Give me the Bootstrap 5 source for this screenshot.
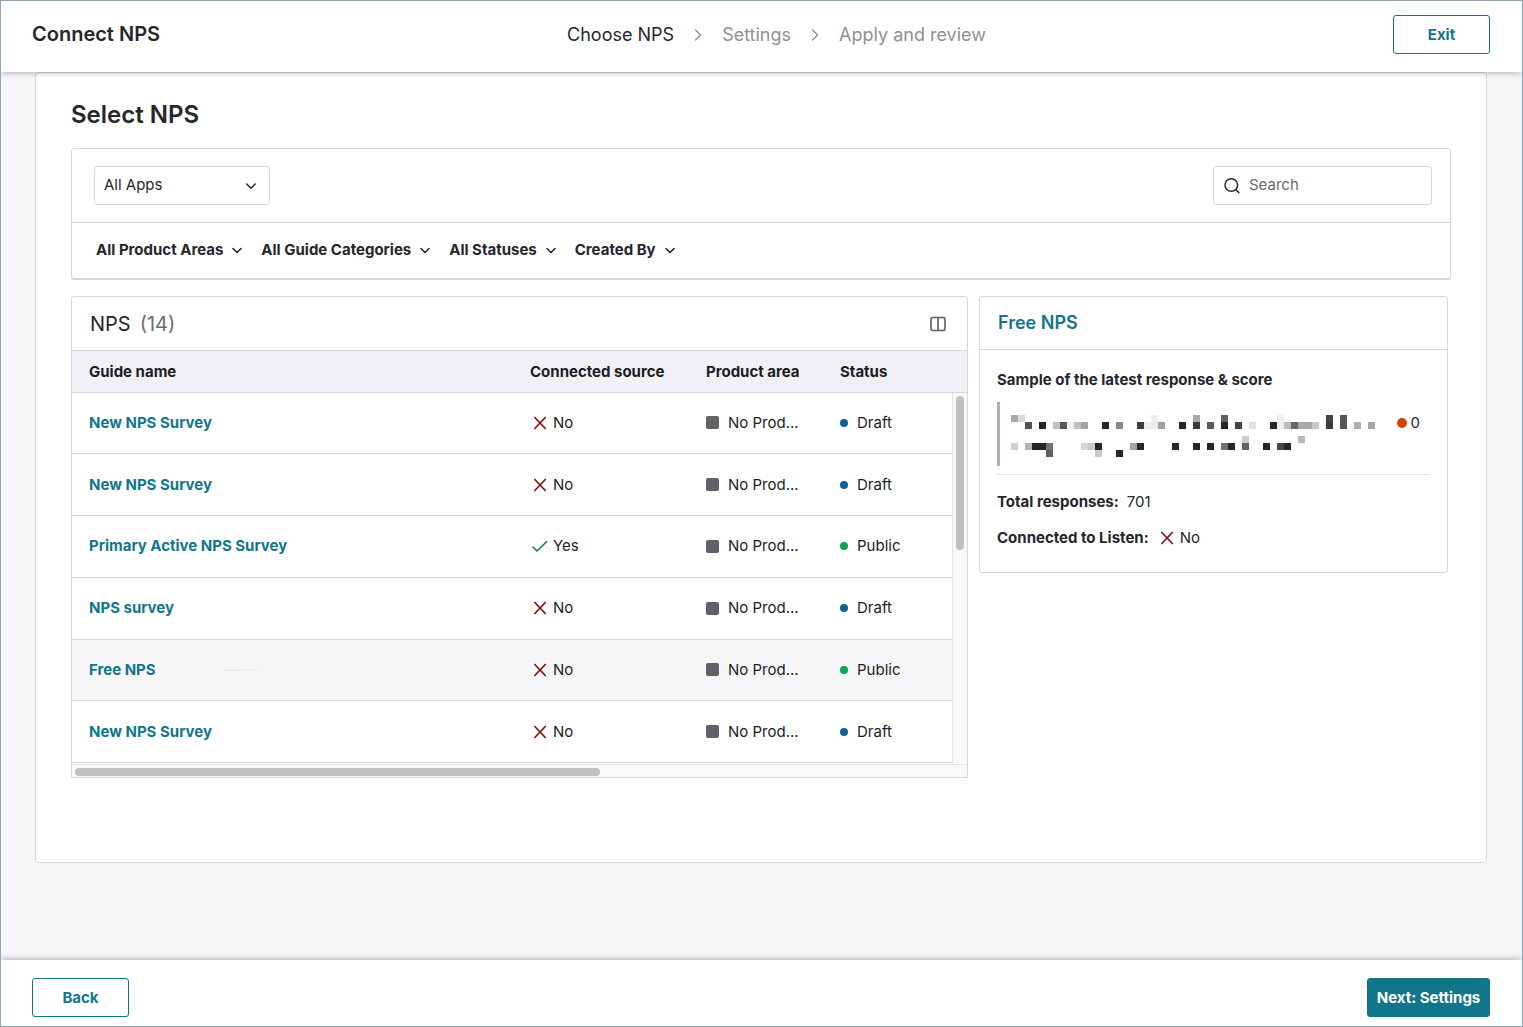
<!DOCTYPE html>
<html lang="en">
<head>
<meta charset="utf-8">
<meta name="viewport" content="width=device-width, initial-scale=1">
<title>Connect NPS</title>
<link href="https://cdn.jsdelivr.net/npm/bootstrap@5.3.0/dist/css/bootstrap.min.css" rel="stylesheet">
<style>
  :root { --teal: #12768a; --ink: #26262d; --line: #d6d7dd; }
  body { font-family: Inter, "Liberation Sans", sans-serif; font-size: 15px; line-height: 22px; color: var(--ink); background: #f6f6f9; border: 1px solid #8fa3b3; }
  a { color: var(--teal); text-decoration: none; font-weight: 600; }
  svg { flex: none; display: block; }
  .top-bar { padding: 14px 32px 18px 31px; box-shadow: 0 1px 6px rgba(0,0,0,.28); z-index: 2; }
  .bottom-bar { padding: 18px 32px 9px 31px; box-shadow: 0 -1px 6px rgba(0,0,0,.28); z-index: 2; }
  .app-title { font-size: 20px; line-height: 38px; font-weight: 600; }
  .btn-app { --bs-btn-color: var(--teal); --bs-btn-border-color: var(--teal); --bs-btn-bg: #fff; --bs-btn-hover-bg: #eaf5f7; --bs-btn-hover-color: var(--teal); --bs-btn-hover-border-color: var(--teal);
    --bs-btn-font-size: 15px; --bs-btn-font-weight: 700; --bs-btn-line-height: 22px; --bs-btn-border-radius: 3px; --bs-btn-padding-x: 7px; min-width: 97px; height: 39px; }
  .btn-next { --bs-btn-bg: var(--teal); --bs-btn-color: #fff; min-width: 123px; }
  .steps { font-size: 18px; line-height: 39px; gap: 14px; }
  .steps a { color: #8f9097; font-weight: 400; }
  .steps a.current { color: var(--ink); }
  .sheet { margin: 0 35px 0 34px; padding: 24px 35px 84px; background: #fff; border: 1px solid var(--line); border-radius: 4px; }
  .sheet-title { font-size: 24px; line-height: 36px; font-weight: 600; margin-bottom: 15px; }
  .panel { background: #fff; border: 1px solid var(--line); border-radius: 3px; }
  .filters { box-shadow: 0 1px 0 var(--line); }
  .filters-top { padding: 17px 18px 17px 22px; border-bottom: 1px solid var(--line); }
  .filters-more { padding: 16px 24px 17px; gap: 18px; }
  .filters-more button { border: 0; background: none; padding: 0; font-weight: 700; color: var(--ink); gap: 8px; }
  .app-select { width: 176px; height: 39px; font-size: 15px; color: var(--ink); padding: 0 36px 0 9px; border: 1px solid var(--line); border-radius: 3px;
    background-image: url("data:image/svg+xml,%3Csvg xmlns='http://www.w3.org/2000/svg' viewBox='0 0 12 12' fill='none' stroke='%2326262d' stroke-width='1.5' stroke-linecap='round' stroke-linejoin='round'%3E%3Cpath d='M1.8 4 6 8.2 10.2 4'/%3E%3C/svg%3E"); background-size: 12px; background-position: right 12px center; }
  .search-box { width: 219px; height: 39px; padding-left: 10px; gap: 8px; border: 1px solid var(--line); border-radius: 3px; }
  .search-box input { border: 0; outline: 0; padding: 0 0 2px; min-width: 0; flex: 1; color: var(--ink); background: none; }
  .search-box input::placeholder { color: #6a6c75; opacity: 1; }
  .columns { margin: 17px 3px 0 0; gap: 11px; }
  .list-side { flex: 895 1 0; min-width: 0; border-radius: 3px 3px 0 0; }
  .detail-side { flex: 467 1 0; min-width: 0; }
  .list-head { height: 54px; padding: 0 21px 0 18px; border-bottom: 1px solid var(--line); }
  .list-head h2 { font-size: 20px; line-height: 24px; font-weight: 400; gap: 9px; }
  .list-head small { font-size: 20px; color: #6a6c75; }
  .grid-table { table-layout: fixed; width: 100%; height: 412px; }
  .grid-table th { height: 41px; padding: 2px 0 0 18px; background: #f1f0f6; font-weight: 700; border-bottom: 1px solid var(--line); color: #1d1d24; white-space: nowrap; }
  .grid-table td { height: 61px; padding: 0 0 0 18px; border-bottom: 1px solid var(--line); color: #1d1d24; white-space: nowrap; }
  .grid-table th:first-child, .grid-table td:first-child { padding-left: 17px; }
  .grid-table a, .detail-body b { font-weight: 700; }
  .grid-table tr.picked td { background: #f6f6f9; }
  .col-source { width: 176px; } .col-area { width: 134px; } .col-state { width: 145px; }
  .cell-mark { gap: 3px; }
  .cell-tag { gap: 9px; }
  .swatch { width: 13px; height: 13px; border-radius: 2px; background: #5f606a; }
  .state-dot { width: 8px; height: 8px; border-radius: 50%; background: #0d5f96; }
  .state-dot.live { background: #0ba35c; }
  .trace { width: 46px; height: 2px; margin-left: 68px; background: linear-gradient(90deg, #e6e9ee, #f6f6f9); }
  .v-track { position: absolute; top: 42px; right: 0; bottom: 0; width: 15px; background: #f9f9fa; border-left: 1px solid #e4e4e8; padding: 3px; }
  .v-thumb { width: 8px; height: 154px; border-radius: 4px; background: #c0c0c0; }
  .h-track { height: 13px; margin-top: 1px; padding: 3px; background: #f9f9fa; border-top: 1px solid #e4e4e8; }
  .h-thumb { width: 59%; height: 8px; border-radius: 4px; background: #c0c0c0; }
  .detail-head { padding: 0 18px; font-size: 18px; line-height: 52px; border-bottom: 1px solid var(--line); }
  .detail-head h2 { font-size: 18px; line-height: 52px; margin: 0; }
  .detail-body { padding: 19px 17px 23px; }
  .quote { height: 64px; margin-top: 11px; padding: 10px 10px 0 11px; border-left: 3px solid #b0b1b8; }
  .score-dot { width: 10px; height: 10px; border-radius: 50%; background: #d44000; }
  .facts { margin-top: 8px; padding-top: 16px; border-top: 1px solid #e6e6ea; gap: 14px; }
</style>
<script src="https://cdn.jsdelivr.net/npm/bootstrap@5.3.0/dist/js/bootstrap.bundle.min.js"></script>
</head>
<body class="d-flex flex-column min-vh-100">
<svg width="0" height="0" class="position-absolute" aria-hidden="true">
  <symbol id="down" viewBox="0 0 12 12"><path d="M2 4.500l4 4 4-4" fill="none" stroke="#26262d" stroke-width="1.600" stroke-linecap="round" stroke-linejoin="round"/></symbol>
  <symbol id="right" viewBox="0 0 20 20"><path d="M7.500 5 12.500 10l-5 5" fill="none" stroke="#8f9097" stroke-width="1.400" stroke-linecap="round" stroke-linejoin="round"/></symbol>
  <symbol id="cross" viewBox="0 0 20 20"><path d="M4.800 4.500l10.500 11M15.300 4.500l-10.500 11" fill="none" stroke="#8a0f14" stroke-width="1.700" stroke-linecap="round"/></symbol>
  <symbol id="tick" viewBox="0 0 20 20"><path d="M3 11l4 4L16.800 5.500" fill="none" stroke="#0c7d43" stroke-width="1.500" stroke-linecap="round" stroke-linejoin="round"/></symbol>
</svg>

<header class="top-bar bg-white d-flex justify-content-between position-relative">
  <h1 class="app-title m-0">Connect NPS</h1>
  <nav class="steps d-flex align-items-center" aria-label="Steps">
    <a href="#" class="current" aria-current="step">Choose NPS</a>
    <svg width="20" height="20"><use href="#right"/></svg>
    <a href="#">Settings</a>
    <svg width="20" height="20"><use href="#right"/></svg>
    <a href="#">Apply and review</a>
  </nav>
  <button type="button" class="btn btn-app">Exit</button>
</header>

<main class="flex-grow-1">
  <div class="sheet">
    <h2 class="sheet-title">Select NPS</h2>
    <section class="panel filters">
      <div class="filters-top d-flex justify-content-between">
        <select class="form-select app-select" aria-label="App"><option>All Apps</option></select>
        <label class="search-box d-flex align-items-center">
          <svg width="17" height="17" viewBox="0 0 17 17" fill="none" stroke="#26262d" stroke-width="1.500" stroke-linecap="round"><circle cx="7.300" cy="8" r="6.300"/><path d="M12 12.800l2.800 2.800"/></svg>
          <input type="search" placeholder="Search" aria-label="Search">
        </label>
      </div>
      <div class="filters-more d-flex">
        <button type="button" class="d-flex align-items-center">All Product Areas <svg width="12" height="12"><use href="#down"/></svg></button>
        <button type="button" class="d-flex align-items-center">All Guide Categories <svg width="12" height="12"><use href="#down"/></svg></button>
        <button type="button" class="d-flex align-items-center">All Statuses <svg width="12" height="12"><use href="#down"/></svg></button>
        <button type="button" class="d-flex align-items-center">Created By <svg width="12" height="12"><use href="#down"/></svg></button>
      </div>
    </section>

    <div class="columns d-flex align-items-start">
      <section class="panel list-side">
        <div class="list-head d-flex align-items-center justify-content-between">
          <h2 class="m-0 d-flex">NPS <small>(14)</small></h2>
          <svg width="16" height="16" viewBox="0 0 16 16" fill="none" stroke="#5b5c66" stroke-width="1.600"><rect x="1" y="1.500" width="14" height="13" rx="1.500"/><path d="M8 1.500v13"/></svg>
        </div>
        <div class="position-relative">
          <table class="grid-table">
            <thead><tr><th>Guide name</th><th class="col-source">Connected source</th><th class="col-area">Product area</th><th class="col-state">Status</th></tr></thead>
            <tbody>
              <tr><td><a href="#">New NPS Survey</a></td><td><div class="cell-mark d-flex align-items-center"><svg width="20" height="20"><use href="#cross"/></svg>No</div></td><td><div class="d-flex align-items-center cell-tag"><span class="swatch"></span>No Prod...</div></td><td><div class="d-flex align-items-center cell-tag"><span class="state-dot"></span>Draft</div></td></tr>
              <tr><td><a href="#">New NPS Survey</a></td><td><div class="cell-mark d-flex align-items-center"><svg width="20" height="20"><use href="#cross"/></svg>No</div></td><td><div class="d-flex align-items-center cell-tag"><span class="swatch"></span>No Prod...</div></td><td><div class="d-flex align-items-center cell-tag"><span class="state-dot"></span>Draft</div></td></tr>
              <tr><td><a href="#">Primary Active NPS Survey</a></td><td><div class="cell-mark d-flex align-items-center"><svg width="20" height="20"><use href="#tick"/></svg>Yes</div></td><td><div class="d-flex align-items-center cell-tag"><span class="swatch"></span>No Prod...</div></td><td><div class="d-flex align-items-center cell-tag"><span class="state-dot live"></span>Public</div></td></tr>
              <tr><td><a href="#">NPS survey</a></td><td><div class="cell-mark d-flex align-items-center"><svg width="20" height="20"><use href="#cross"/></svg>No</div></td><td><div class="d-flex align-items-center cell-tag"><span class="swatch"></span>No Prod...</div></td><td><div class="d-flex align-items-center cell-tag"><span class="state-dot"></span>Draft</div></td></tr>
              <tr class="picked"><td><div class="d-flex align-items-center"><a href="#">Free NPS</a><span class="trace"></span></div></td><td><div class="cell-mark d-flex align-items-center"><svg width="20" height="20"><use href="#cross"/></svg>No</div></td><td><div class="d-flex align-items-center cell-tag"><span class="swatch"></span>No Prod...</div></td><td><div class="d-flex align-items-center cell-tag"><span class="state-dot live"></span>Public</div></td></tr>
              <tr><td><a href="#">New NPS Survey</a></td><td><div class="cell-mark d-flex align-items-center"><svg width="20" height="20"><use href="#cross"/></svg>No</div></td><td><div class="d-flex align-items-center cell-tag"><span class="swatch"></span>No Prod...</div></td><td><div class="d-flex align-items-center cell-tag"><span class="state-dot"></span>Draft</div></td></tr>
            </tbody>
          </table>
          <div class="v-track"><div class="v-thumb"></div></div>
        </div>
        <div class="h-track"><div class="h-thumb"></div></div>
      </section>

      <section class="panel detail-side">
        <div class="detail-head"><h2><a href="#">Free NPS</a></h2></div>
        <div class="detail-body">
          <b>Sample of the latest response &amp; score</b>
          <div class="quote d-flex justify-content-between align-items-start">
            <svg width="364" height="48" viewBox="0 -3 364 48" shape-rendering="crispEdges" role="img" aria-label="Redacted response" id="redacted"></svg>
            <div class="d-flex align-items-center gap-1"><span class="score-dot"></span>0</div>
          </div>
          <div class="facts d-flex flex-column">
            <div class="d-flex gap-2"><b>Total responses:</b>701</div>
            <div class="d-flex gap-2"><b>Connected to Listen:</b><span class="cell-mark d-flex align-items-center"><svg width="20" height="20"><use href="#cross"/></svg>No</span></div>
          </div>
        </div>
      </section>
    </div>
  </div>
</main>

<footer class="bottom-bar bg-white d-flex justify-content-between position-relative">
  <button type="button" class="btn btn-app">Back</button>
  <button type="button" class="btn btn-app btn-next">Next: Settings</button>
</footer>
<script>
  // Redaction mosaic: each line is a row of 7px cells, written as column:colour
  const mosaic = {
    0: '0:a9a9ab 1:d9d9da 20:ededed 26:a9a9ae 30:636268 38:efefef 45:42424a 47:56555d',
    1: '2:55545a 4:25252b 6:c0c0c2 7:56555a 8:f0f0f0 9:c1c1c3 10:a2a1a6 13:25252b 15:89898b 18:3c3c42 19:eeeeee 20:ededed 21:a2a2a5 24:25252b 26:3a3a40 28:5a595f 30:222228 32:404046 34:e2e2e2 37:25252b 38:eeeeee 39:bcbcbe 40:66656b 41:a9a9ae 42:a9a9ae 43:c9c9cc 45:393942 47:56555d 49:afafb2 51:a5a5a8',
    3: '33:cccccf 41:bababd',
    4: '0:cfcfd0 2:b3b3b7 3:25252b 4:25252b 5:727277 10:d4d4d5 11:c9c9cb 12:25252b 17:a4a3a8 18:25252b 23:25252b 26:25252b 28:25252b 30:727178 31:25252b 33:626167 36:25252b 38:45454c 39:25252b',
    5: '5:5e5e63 12:c9c9cb 15:25252b'
  };
  let cells = '';
  for (const [row, line] of Object.entries(mosaic))
    for (const item of line.split(' ')) {
      const [col, colour] = item.split(':');
      cells += `<rect x="${col * 7}" y="${row * 7}" width="7" height="7" fill="#${colour}"/>`;
    }
  document.getElementById('redacted').innerHTML = cells;
</script>
</body>
</html>
